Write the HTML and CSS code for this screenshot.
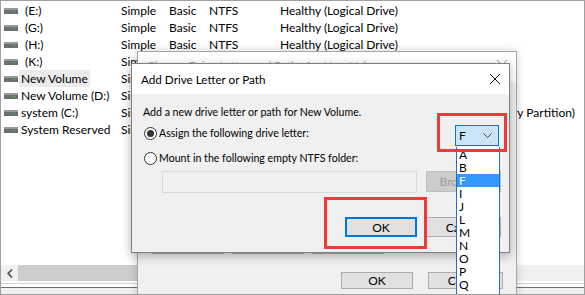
FILE: index.html
```html
<!DOCTYPE html>
<html>
<head>
<meta charset="utf-8">
<title>Add Drive Letter or Path</title>
<link rel="stylesheet" href="styles.css">
</head>
<body>
<div class="window">
  <div class="list">
    <div class="row"><span class="ico"><svg width="14" height="6" viewBox="0 0 14 6"><rect x="0" y="0" width="14" height="6" fill="#6e6e6e"/><rect x="0" y="0" width="14" height="2" fill="#9a9a9a"/><rect x="9" y="3" width="2" height="1" fill="#2fd12f"/></svg></span><span class="name nolabel">(E:)</span><span>Simple</span><span>Basic</span><span>NTFS</span><span>Healthy (Logical Drive)</span></div>
    <div class="row"><span class="ico"><svg width="14" height="6" viewBox="0 0 14 6"><rect x="0" y="0" width="14" height="6" fill="#6e6e6e"/><rect x="0" y="0" width="14" height="2" fill="#9a9a9a"/><rect x="9" y="3" width="2" height="1" fill="#2fd12f"/></svg></span><span class="name nolabel">(G:)</span><span>Simple</span><span>Basic</span><span>NTFS</span><span>Healthy (Logical Drive)</span></div>
    <div class="row"><span class="ico"><svg width="14" height="6" viewBox="0 0 14 6"><rect x="0" y="0" width="14" height="6" fill="#6e6e6e"/><rect x="0" y="0" width="14" height="2" fill="#9a9a9a"/><rect x="9" y="3" width="2" height="1" fill="#2fd12f"/></svg></span><span class="name nolabel">(H:)</span><span>Simple</span><span>Basic</span><span>NTFS</span><span>Healthy (Logical Drive)</span></div>
    <div class="row"><span class="ico"><svg width="14" height="6" viewBox="0 0 14 6"><rect x="0" y="0" width="14" height="6" fill="#6e6e6e"/><rect x="0" y="0" width="14" height="2" fill="#9a9a9a"/><rect x="9" y="3" width="2" height="1" fill="#2fd12f"/></svg></span><span class="name nolabel">(K:)</span><span>Simple</span><span>Basic</span><span>NTFS</span><span>Healthy (Logical Drive)</span></div>
    <div class="row"><span class="ico"><svg width="14" height="6" viewBox="0 0 14 6"><rect x="0" y="0" width="14" height="6" fill="#6e6e6e"/><rect x="0" y="0" width="14" height="2" fill="#9a9a9a"/><rect x="9" y="3" width="2" height="1" fill="#2fd12f"/></svg></span><span class="name selected">New Volume</span><span>Simple</span><span>Basic</span><span>NTFS</span><span>Healthy (Logical Drive)</span></div>
    <div class="row"><span class="ico"><svg width="14" height="6" viewBox="0 0 14 6"><rect x="0" y="0" width="14" height="6" fill="#6e6e6e"/><rect x="0" y="0" width="14" height="2" fill="#9a9a9a"/><rect x="9" y="3" width="2" height="1" fill="#2fd12f"/></svg></span><span class="name">New Volume (D:)</span><span>Simple</span><span>Basic</span><span>NTFS</span><span>Healthy (Logical Drive)</span></div>
    <div class="row"><span class="ico"><svg width="14" height="6" viewBox="0 0 14 6"><rect x="0" y="0" width="14" height="6" fill="#6e6e6e"/><rect x="0" y="0" width="14" height="2" fill="#9a9a9a"/><rect x="9" y="3" width="2" height="1" fill="#2fd12f"/></svg></span><span class="name">system (C:)</span><span>Simple</span><span>Basic</span><span>NTFS</span><span>Healthy (Boot, Page File, Crash Dump, Primary Partition)</span></div>
    <div class="row"><span class="ico"><svg width="14" height="6" viewBox="0 0 14 6"><rect x="0" y="0" width="14" height="6" fill="#6e6e6e"/><rect x="0" y="0" width="14" height="2" fill="#9a9a9a"/><rect x="9" y="3" width="2" height="1" fill="#2fd12f"/></svg></span><span class="name">System Reserved</span><span>Simple</span><span>Basic</span><span>NTFS</span><span>Healthy (System, Active, Primary Partition)</span></div>
  </div>
  <div class="hscroll">
    <div class="arrow"><svg width="6" height="9" viewBox="0 0 6 9"><path d="M5 0.5 L1.2 4.5 L5 8.5" fill="none" stroke="#555" stroke-width="1.8"/></svg></div>
    <div class="thumb"></div>
  </div>
  <div class="status"></div>

  <div class="dlg dlg-back">
    <div class="titlebar back-title">
      <span class="title inactive">Change Drive Letter and Paths for New Volume</span>
      <svg class="close" width="10" height="10" viewBox="0 0 10 10"><path d="M0 0 L10 10 M10 0 L0 10" stroke="#9a9a9a" stroke-width="1"/></svg>
    </div>
    <div class="body back-body">
      <div class="paths"></div>
      <div class="btnrow left">
        <div class="btn">Add...</div>
        <div class="btn">Change...</div>
        <div class="btn">Remove</div>
      </div>
      <div class="btnrow right bottom-row">
        <div class="btn short">OK</div>
        <div class="btn short wide">Cancel</div>
      </div>
    </div>
  </div>

  <div class="dlg dlg-front">
    <div class="titlebar">
      <span class="title">Add Drive Letter or Path</span>
      <svg class="close" width="10" height="10" viewBox="0 0 10 10"><path d="M0 0 L10 10 M10 0 L0 10" stroke="#111" stroke-width="1"/></svg>
    </div>
    <div class="body front-body">
      <div class="intro">Add a new drive letter or path for New Volume.</div>
      <div class="opt-row">
        <label class="choice"><span class="radio checked"></span><span>Assign the following drive letter:</span></label>
        <div class="combo"><span>F</span><svg width="9" height="5" viewBox="0 0 9 5"><path d="M0.5 0.5 L4.5 4.5 L8.5 0.5" fill="none" stroke="#444" stroke-width="1"/></svg></div>
      </div>
      <div class="opt-row second">
        <label class="choice"><span class="radio"></span><span>Mount in the following empty NTFS folder:</span></label>
      </div>
      <div class="folder-row">
        <div class="field"></div>
        <div class="btn disabled">Browse...</div>
      </div>
      <div class="btnrow right actions">
        <div class="btn default ok">OK</div>
        <div class="btn">Cancel</div>
      </div>
    </div>
  </div>

  <ul class="droplist">
    <li>A</li><li>B</li><li class="hl">F</li><li>I</li><li>J</li><li>L</li><li>M</li><li>N</li><li>O</li><li>P</li><li>Q</li><li>R</li>
  </ul>

  <div class="mark mark-combo"></div>
  <div class="mark mark-ok"></div>
</div>
</body>
</html>
```

FILE: styles.css
```css
* { box-sizing: border-box; }
html, body { margin: 0; padding: 0; }
body {
  width: 585px;
  height: 295px;
  overflow: hidden;
  font-family: "Lato", "Open Sans", sans-serif;
  font-size: 12px;
  color: #000;
  background: #fff;
}
.window {
  position: relative;
  width: 585px;
  height: 295px;
  border: 1px solid #a0a0a0;
  display: flex;
  flex-direction: column;
  overflow: hidden;
  background: #fff;
}
.list {
  flex: 1;
  padding-top: 1px;
  background: #fff;
}
.row {
  display: grid;
  grid-template-columns: 20px 100px 48px 40px 71px max-content;
  height: 17px;
  line-height: 17px;
  white-space: nowrap;
}
.ico {
  display: flex;
  align-items: center;
  padding-left: 3px;
  padding-top: 1px;
}
.ico svg { display: block; }
.name { justify-self: start; }
.nolabel { padding-left: 4px; }
.selected {
  background: #ebebeb;
  margin-left: -2px;
  padding: 0 2px;
}
.hscroll {
  height: 16px;
  display: flex;
  background: #f0f0f0;
}
.arrow {
  width: 17px;
  display: flex;
  align-items: center;
  justify-content: center;
}
.thumb {
  width: 400px;
  background: #cdcdcd;
}
.status {
  height: 13px;
  background: linear-gradient(#fff 0, #fff 2px, #d0d0d0 2px, #d0d0d0 3px, #fff 3px, #fff 6px, #6e6e6e 6px, #6e6e6e 7px, #f0f0f0 7px);
}

/* dialogs */
.dlg {
  position: absolute;
  background: #f0f0f0;
  display: flex;
  flex-direction: column;
}
.dlg-back {
  left: 136px;
  top: 50px;
  width: 380px;
  height: 270px;
  border: 1px solid #a6a6a6;
  box-shadow: 0 0 9px rgba(0,0,0,0.18);
}
.dlg-front {
  left: 130px;
  top: 62px;
  width: 379px;
  height: 190px;
  border: 1px solid #808080;
  box-shadow: 0 3px 10px rgba(0,0,0,0.28);
}
.titlebar {
  height: 30px;
  background: #fff;
  display: flex;
  align-items: center;
  justify-content: space-between;
  padding: 0 9px 0 9px;
  flex: none;
}
.back-title { padding-bottom: 5px; }
.title { font-size: 11.7px; }
.title.inactive { color: #a8a8a8; }
.close { display: block; }
.body { flex: 1; }

.back-body {
  padding: 10px 13px 0 14px;
  display: flex;
  flex-direction: column;
  font-size: 11px;
}
.paths { height: 139px; background: #fff; border: 1px solid #d0d0d0; }
.btnrow { display: flex; }
.btnrow.left { gap: 8px; }
.btnrow.left .btn { width: 72px; height: 23px; }
.btnrow.right { justify-content: flex-end; }
.bottom-row { margin-top: 18px; gap: 15px; }
.bottom-row .btn { width: 72px; height: 17px; font-size: 12px; }
.bottom-row .btn.wide { width: 75px; }

.btn {
  border: 1px solid #adadad;
  background: #e1e1e1;
  display: flex;
  align-items: center;
  justify-content: center;
  white-space: nowrap;
  overflow: hidden;
}

.front-body {
  padding: 10px 8px 0 11px;
  font-size: 10.6px;
}
.intro { line-height: 16px; }
.opt-row {
  display: flex;
  align-items: flex-start;
  height: 21px;
  margin-top: 5px;
}
.opt-row.second { margin-top: 6px; height: 13px; }
.choice {
  display: flex;
  align-items: center;
  gap: 2px;
  line-height: 13px;
  height: 13px;
  margin-top: 2px;
}
.opt-row.second .choice { margin-top: 0; }
.radio {
  width: 13px;
  height: 13px;
  border-radius: 50%;
  border: 1px solid #333;
  background: #fff;
  margin-left: 1px;
  display: flex;
  align-items: center;
  justify-content: center;
  flex: none;
}
.radio.checked::after {
  content: "";
  width: 7px;
  height: 7px;
  border-radius: 50%;
  background: #333;
}
.combo {
  margin-left: auto;
  margin-right: 2px;
  width: 44px;
  height: 21px;
  border: 1px solid #0078d7;
  background: #cce4f7;
  display: flex;
  align-items: center;
  justify-content: space-between;
  padding: 0 6px 0 3px;
  font-size: 12px;
}
.combo svg { display: block; }
.folder-row {
  display: flex;
  align-items: flex-start;
  margin-top: 6px;
  padding-left: 19px;
  gap: 9px;
}
.field {
  width: 255px;
  height: 22px;
  border: 1px solid #d9d9d9;
  background: #f0f0f0;
}
.btn.disabled {
  width: 75px;
  height: 21px;
  background: #cccccc;
  border-color: #bfbfbf;
  color: #9d9d9d;
  font-size: 12px;
}
.actions {
  margin-top: 24px;
  gap: 9px;
}
.actions .btn { width: 75px; height: 20px; font-size: 12px; }
.actions .btn.ok { width: 72px; }
.btn.default { border: 2px solid #0078d7; }

.droplist {
  position: absolute;
  left: 455px;
  top: 146px;
  width: 44px;
  margin: 0;
  padding: 1px 0 0 0;
  list-style: none;
  background: #fff;
  border: 1px solid #1a72c9;
  border-top: none;
  height: 160px;
  overflow: hidden;
}
.droplist li {
  height: 13px;
  line-height: 13px;
  padding-left: 2px;
  font-size: 12px;
}
.droplist li.hl { background: #3399ff; color: #fff; }

.mark {
  position: absolute;
  border: 3px solid #f03a3a;
}
.mark-combo { left: 436px; top: 112px; width: 70px; height: 39px; }
.mark-ok { left: 323px; top: 196px; width: 103px; height: 52px; }
```
